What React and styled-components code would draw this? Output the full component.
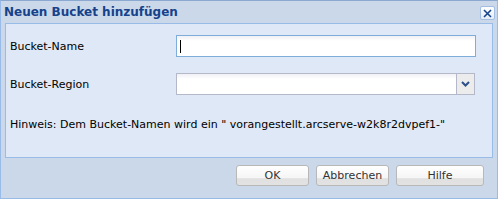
import React from "react";
import styled, { createGlobalStyle } from "styled-components";

const GlobalStyle = createGlobalStyle`
  html, body {
    margin: 0;
    padding: 0;
    background: #ffffff;
  }
  body {
    font-family: Tahoma, "DejaVu Sans", "Liberation Sans", sans-serif;
  }
`;

const Window = styled.div`
  box-sizing: border-box;
  width: 498px;
  height: 199px;
  background: #cad8e9;
  border: 1px solid #99bbe8;
  border-top-color: #8aa8d0;
  display: flex;
  flex-direction: column;
  padding: 0 4px 0 4px;
`;

const Header = styled.div`
  height: 22px;
  display: flex;
  align-items: center;
  justify-content: space-between;
`;

const Title = styled.span`
  font-family: "DejaVu Sans", sans-serif;
  font-weight: bold;
  font-size: 12px;
  color: #15428b;
  margin-left: -1px;
`;

const CloseButton = styled.div`
  box-sizing: border-box;
  width: 15px;
  height: 14px;
  margin-right: -2px;
  margin-top: 2px;
  border: 1px solid #a3bde3;
  border-radius: 2px;
  background: linear-gradient(#ffffff, #e3ecf8);
  display: flex;
  align-items: center;
  justify-content: center;
`;

const Panel = styled.div`
  box-sizing: border-box;
  height: 135px;
  background: #dfe8f6;
  border: 1px solid #99bbe8;
  padding: 11px 0 0 4px;
  display: flex;
  flex-direction: column;
`;

const Row = styled.div`
  display: flex;
  align-items: center;
  height: 22px;
  margin-bottom: ${(p) => p.$gap || 0}px;
`;

const Label = styled.label`
  width: 166px;
  font-family: "DejaVu Sans", sans-serif;
  font-size: 11px;
  color: #000;
`;

const TextInput = styled.div`
  box-sizing: border-box;
  width: 300px;
  height: 22px;
  border: 1px solid #7eadd9;
  background: linear-gradient(#f0f0f6 0, #ffffff 5px);
  display: flex;
  align-items: center;
  padding-left: 3px;
`;

const Caret = styled.span`
  width: 1px;
  height: 13px;
  background: #000;
`;

const Select = styled.div`
  box-sizing: border-box;
  width: 299px;
  height: 22px;
  border: 1px solid #b5b8c8;
  background: linear-gradient(#f0f0f6 0, #ffffff 5px);
  display: flex;
  justify-content: flex-end;
`;

const Trigger = styled.div`
  width: 17px;
  height: 100%;
  border-left: 1px solid #b5b8c8;
  background: #ececec;
  display: flex;
  align-items: center;
  justify-content: center;
`;

const Hint = styled.div`
  margin-top: 23px;
  font-family: "DejaVu Sans", sans-serif;
  font-size: 11px;
  color: #000;
  white-space: nowrap;
`;

const Footer = styled.div`
  display: flex;
  justify-content: flex-end;
  gap: 7px;
  padding: 7px 9px 0 0;
`;

const Button = styled.button`
  box-sizing: border-box;
  width: ${(p) => p.$w}px;
  height: 21px;
  border: 1px solid #b8b8b8;
  border-radius: 3px;
  background: linear-gradient(#ffffff 0, #f5f5f5 65%, #e0e0e0 66%, #e2e2e2 100%);
  font-family: "DejaVu Sans", sans-serif;
  font-size: 11px;
  color: #333;
  padding: 0;
`;

export default function App() {
  return (
    <>
      <GlobalStyle />
      <Window>
        <Header>
          <Title>Neuen Bucket hinzufügen</Title>
          <CloseButton>
            <svg width="9" height="9" viewBox="0 0 9 9">
              <path d="M1 1 L8 8 M8 1 L1 8" stroke="#15428b" strokeWidth="1.6" />
            </svg>
          </CloseButton>
        </Header>
        <Panel>
          <Row $gap={16}>
            <Label>Bucket-Name</Label>
            <TextInput>
              <Caret />
            </TextInput>
          </Row>
          <Row>
            <Label>Bucket-Region</Label>
            <Select>
              <Trigger>
                <svg width="9" height="6" viewBox="0 0 9 6">
                  <path d="M1 1 L4.5 4.5 L8 1" stroke="#2d4f8a" strokeWidth="2" fill="none" />
                </svg>
              </Trigger>
            </Select>
          </Row>
          <Hint>
            Hinweis: Dem Bucket-Namen wird ein " vorangestellt.arcserve-w2k8r2dvpef1-"
          </Hint>
        </Panel>
        <Footer>
          <Button $w={73}>OK</Button>
          <Button $w={73}>Abbrechen</Button>
          <Button $w={88}>Hilfe</Button>
        </Footer>
      </Window>
    </>
  );
}
